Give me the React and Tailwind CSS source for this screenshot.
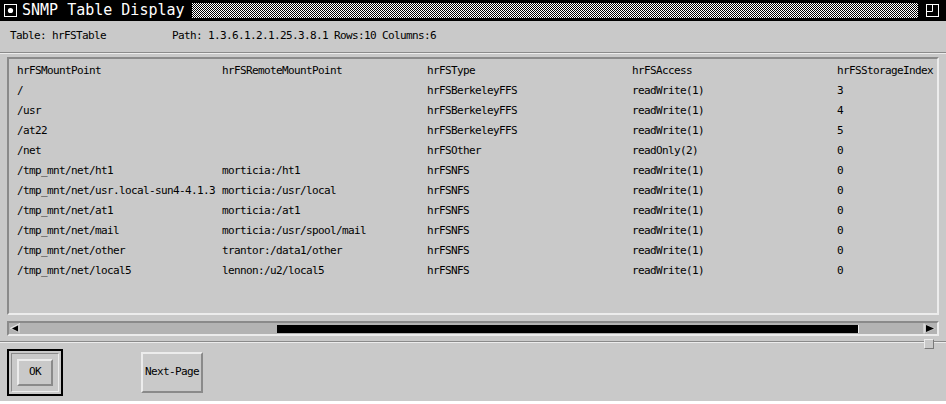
import React from 'react';

const columns = ['hrFSMountPoint', 'hrFSRemoteMountPoint', 'hrFSType', 'hrFSAccess', 'hrFSStorageIndex'];

const rows = [
  ['/', '', 'hrFSBerkeleyFFS', 'readWrite(1)', '3'],
  ['/usr', '', 'hrFSBerkeleyFFS', 'readWrite(1)', '4'],
  ['/at22', '', 'hrFSBerkeleyFFS', 'readWrite(1)', '5'],
  ['/net', '', 'hrFSOther', 'readOnly(2)', '0'],
  ['/tmp_mnt/net/ht1', 'morticia:/ht1', 'hrFSNFS', 'readWrite(1)', '0'],
  ['/tmp_mnt/net/usr.local-sun4-4.1.3', 'morticia:/usr/local', 'hrFSNFS', 'readWrite(1)', '0'],
  ['/tmp_mnt/net/at1', 'morticia:/at1', 'hrFSNFS', 'readWrite(1)', '0'],
  ['/tmp_mnt/net/mail', 'morticia:/usr/spool/mail', 'hrFSNFS', 'readWrite(1)', '0'],
  ['/tmp_mnt/net/other', 'trantor:/data1/other', 'hrFSNFS', 'readWrite(1)', '0'],
  ['/tmp_mnt/net/local5', 'lennon:/u2/local5', 'hrFSNFS', 'readWrite(1)', '0'],
];

const TableRow = ({ cells }) => (
  <div className="grid grid-cols-[205px_205px_205px_205px_auto] h-[20px] items-center whitespace-nowrap">
    {cells.map((c, i) => (
      <span key={i}>{c}</span>
    ))}
  </div>
);

const MenuIcon = () => (
  <svg width="14" height="14" viewBox="0 0 14 14" className="ml-[4px]">
    <rect x="0.5" y="0.5" width="12" height="12" fill="black" stroke="white" />
    <circle cx="6.5" cy="6.5" r="2.6" fill="white" />
  </svg>
);

const MaxIcon = () => (
  <svg width="14" height="14" viewBox="0 0 14 14">
    <rect x="0.5" y="0.5" width="12" height="12" fill="none" stroke="white" />
    <path d="M1 7.5 H6.5 V1" fill="none" stroke="white" />
  </svg>
);

export default function App() {
  return (
    <div className="w-[946px] h-[404px] bg-white font-['DejaVu_Sans_Mono',monospace] text-[11px] tracking-[-0.62px] text-black">
      <div className="relative h-[401px] bg-[#c9c9c9] flex flex-col">
        {/* title bar */}
        <div className="h-[21px] bg-black flex items-center">
          <MenuIcon />
          <span className="ml-[4px] text-white text-[15px] tracking-normal leading-none whitespace-nowrap">SNMP Table Display</span>
          <div className="ml-[7px] w-[726px] h-[15px] bg-[repeating-conic-gradient(#000_0%_25%,#fff_0%_50%)] bg-size-[2px_2px]" />
          <div className="ml-[8px]">
            <MaxIcon />
          </div>
        </div>

        {/* info line */}
        <div className="h-[31px] flex items-center pl-[10px] whitespace-nowrap">
          <span className="w-[162px]">Table: hrFSTable</span>
          <span>Path: 1.3.6.1.2.1.25.3.8.1 Rows:10 Columns:6</span>
        </div>
        <div className="border-t border-t-[#8a8a8a] border-b border-b-[#ececec]" />

        {/* table */}
        <div className="mt-[3px] mx-[7px] h-[258px] border-2 border-t-[#8a8a8a] border-l-[#8a8a8a] border-b-[#ececec] border-r-[#ececec] pl-[8px] pt-[2px] overflow-hidden">
          <TableRow cells={columns} />
          {rows.map((r, i) => (
            <TableRow key={i} cells={r} />
          ))}
        </div>

        {/* horizontal scrollbar */}
        <div className="mt-[6px] mx-[7px] h-[15px] border-2 border-t-[#8a8a8a] border-l-[#8a8a8a] border-b-[#ececec] border-r-[#ececec] bg-[#b3b3b3] flex items-center">
          <svg width="12" height="11" viewBox="0 0 12 11">
            <path d="M1 5.5 L11 0.5 V10.5 Z" fill="#c9c9c9" />
            <path d="M1 5.5 L11 0.5" stroke="#ececec" />
            <path d="M3 5.5 L9 2.5 V8.5 Z" fill="black" />
          </svg>
          <div className="ml-[256px] w-[582px] h-[8px] bg-black border-r border-r-[#ececec]" />
          <div className="flex-1" />
          <svg width="14" height="11" viewBox="0 0 14 11">
            <path d="M13 5.5 L1 0.5 V10.5 Z" fill="#c9c9c9" />
            <path d="M1 0.5 V10.5" stroke="#ececec" />
            <path d="M11 5.5 L3 2 V9 Z" fill="black" />
          </svg>
        </div>

        <div className="mt-[5px] border-t border-t-[#8a8a8a] border-b border-b-[#ececec]" />
        {/* sash */}
        <div className="absolute left-[924px] top-[339px] w-[10px] h-[10px] bg-[#c9c9c9] border border-t-[#ececec] border-l-[#ececec] border-b-[#7a7a7a] border-r-[#7a7a7a]" />

        {/* buttons */}
        <div className="flex items-center pl-[7px] pt-[6px]">
          <div className="w-[56px] h-[47px] border-2 border-black p-[2px]">
            <div className="w-full h-full border border-t-[#8a8a8a] border-l-[#8a8a8a] border-b-[#ececec] border-r-[#ececec] p-[5px]">
              <div className="w-full h-full border-2 border-t-[#ececec] border-l-[#ececec] border-b-[#8a8a8a] border-r-[#8a8a8a] flex items-center justify-center">
                OK
              </div>
            </div>
          </div>
          <div className="ml-[78px] w-[62px] h-[41px] border-2 border-t-[#ececec] border-l-[#ececec] border-b-[#8a8a8a] border-r-[#8a8a8a] flex items-center justify-center whitespace-nowrap">
            Next-Page
          </div>
        </div>
      </div>
    </div>
  );
}
